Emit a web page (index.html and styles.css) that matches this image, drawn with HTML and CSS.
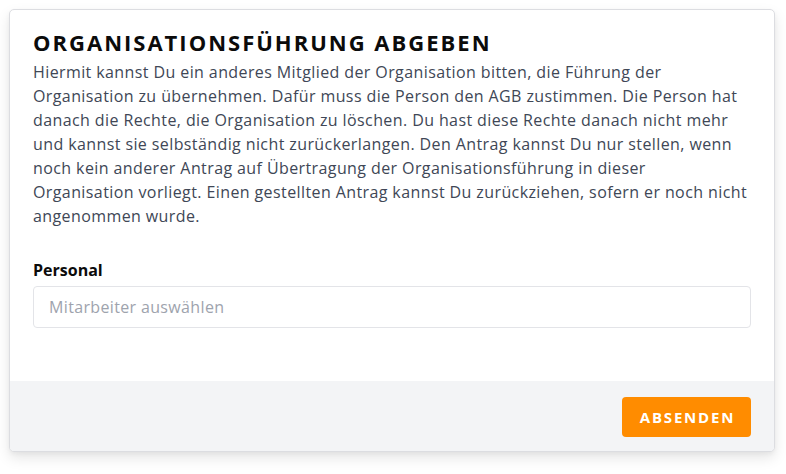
FILE: index.html
```html
<!DOCTYPE html>
<html lang="de">
<head>
<meta charset="utf-8">
<link rel="stylesheet" href="styles.css">
</head>
<body>
<div class="card">
  <div class="card-body">
    <h1 class="title">Organisationsführung abgeben</h1>
    <p class="desc">Hiermit kannst Du ein anderes Mitglied der Organisation bitten, die Führung der Organisation zu übernehmen. Dafür muss die Person den AGB zustimmen. Die Person hat danach die Rechte, die Organisation zu löschen. Du hast diese Rechte danach nicht mehr und kannst sie selbständig nicht zurückerlangen. Den Antrag kannst Du nur stellen, wenn noch kein anderer Antrag auf Übertragung der Organisationsführung in dieser Organisation vorliegt. Einen gestellten Antrag kannst Du zurückziehen, sofern er noch nicht angenommen wurde.</p>
    <label class="field-label" for="staff">Personal</label>
    <input class="field-input" id="staff" type="text" placeholder="Mitarbeiter auswählen">
  </div>
  <div class="card-footer">
    <button class="btn-submit" type="button">Absenden</button>
  </div>
</div>
</body>
</html>
```
FILE: styles.css
```css
html, body {
  margin: 0;
  padding: 0;
  background: #ffffff;
}
body {
  padding: 9px 11px 22px 9px;
  font-family: "Open Sans", "Noto Sans", sans-serif;
}
.card {
  width: 766px;
  box-sizing: border-box;
  background: #ffffff;
  border: 1px solid #dcdde1;
  border-radius: 5px;
  box-shadow: 0 6px 14px rgba(0, 0, 0, 0.10), 0 2px 4px rgba(0, 0, 0, 0.04);
  overflow: hidden;
}
.card-body {
  padding: 17px 23px 53px 23px;
  display: flex;
  flex-direction: column;
}
.title {
  margin: 0;
  font-size: 22px;
  line-height: 30px;
  font-weight: 700;
  letter-spacing: 2px;
  text-transform: uppercase;
  color: #0b0b0b;
}
.desc {
  margin: 3px 0 0 0;
  font-size: 16px;
  line-height: 24px;
  color: #404756;
  letter-spacing: 0.4px;
}
.field-label {
  margin-top: 32px;
  font-size: 16px;
  line-height: 20px;
  font-weight: 700;
  color: #0b0b0b;
}
.field-input {
  margin-top: 6px;
  height: 42px;
  box-sizing: border-box;
  border: 1px solid #e3e4e8;
  border-radius: 4px;
  padding: 0 15px;
  font-family: inherit;
  font-size: 16px;
  letter-spacing: 0.35px;
  color: #374151;
  background: #ffffff;
  outline: none;
}
.field-input::placeholder {
  color: #9ea3ad;
}
.card-footer {
  background: #f3f4f6;
  padding: 16px 23px 14px 23px;
  display: flex;
  justify-content: flex-end;
}
.btn-submit {
  height: 40px;
  width: 129px;
  padding: 0 0 0 2px;
  border: none;
  border-radius: 4px;
  background: #ff8c00;
  color: #ffffff;
  font-family: inherit;
  font-size: 15px;
  font-weight: 700;
  letter-spacing: 1.8px;
  text-transform: uppercase;
  cursor: pointer;
}
```
